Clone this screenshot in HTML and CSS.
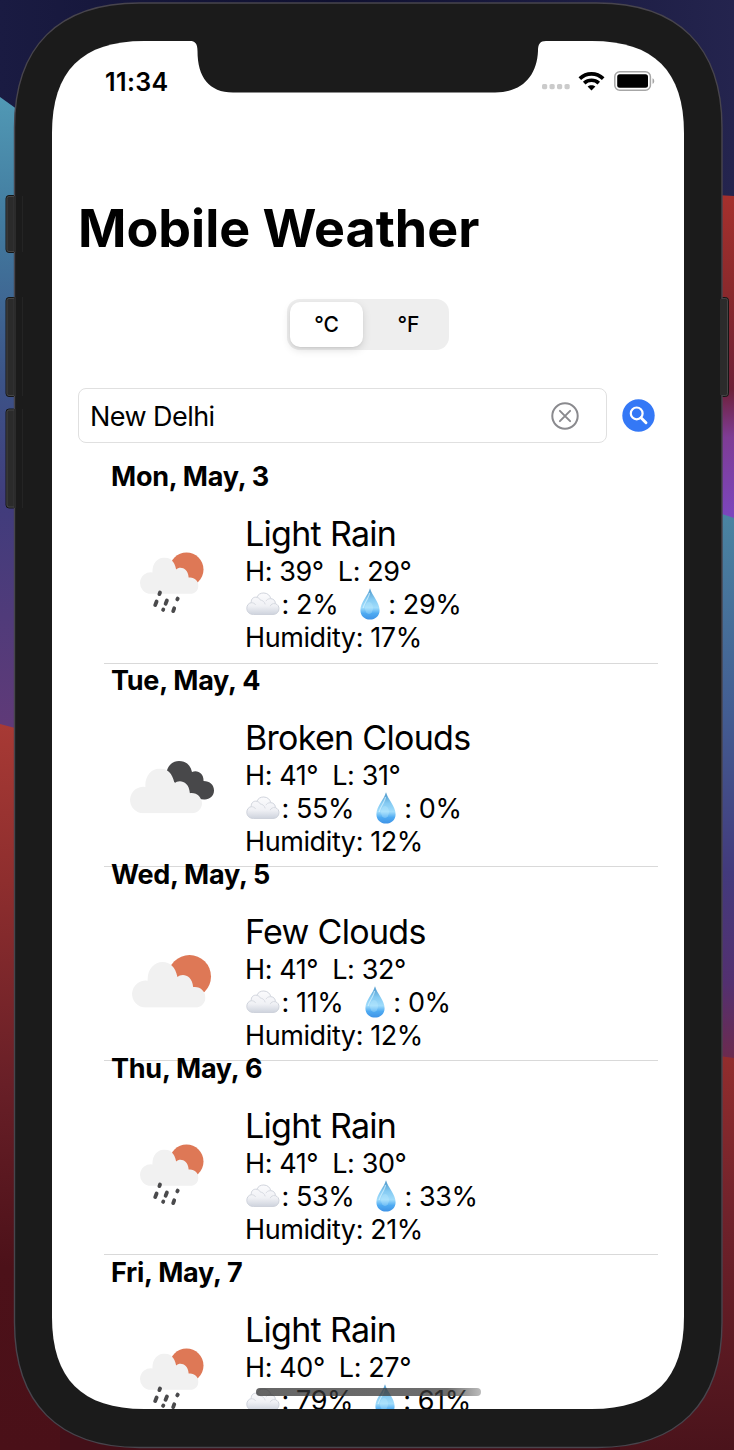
FILE: index.html
```
<!DOCTYPE html>
<html lang="en">
<head>
<meta charset="utf-8">
<title>Mobile Weather</title>
<link rel="stylesheet" href="styles.css">
</head>
<body>
<svg class="defs" width="0" height="0">
  <defs>
    <linearGradient id="puff" x1="0" y1="0" x2="0" y2="1"><stop offset="0" stop-color="#fbfbfd"/><stop offset=".6" stop-color="#f0f1f5"/><stop offset="1" stop-color="#ced3dd"/></linearGradient>
    <linearGradient id="water" x1="0" y1="0" x2="0" y2="1"><stop offset="0" stop-color="#4a94c8"/><stop offset=".35" stop-color="#84caf2"/><stop offset=".62" stop-color="#a0dcfb"/><stop offset=".8" stop-color="#4fabf2"/><stop offset="1" stop-color="#3f93e6"/></linearGradient>
    <symbol id="cloud" viewBox="0 0 220 137">
      <path d="M41 136.500A40.500 40.500 0 1 1 47 56C45 22 66 0 92 0C113 0 130 14 136 45C148 33 180 36 183 75C204 72 220 88 220 106C220 122 207 136.500 189 136.500Z"/>
    </symbol>
    <symbol id="rain" viewBox="0 0 64 62">
      <circle cx="46.500" cy="17.500" r="17" fill="#de7856"/>
      <use href="#cloud" x="0" y="5.500" width="58.500" height="36.500" fill="#f1f1f1"/>
      <g stroke="#4a4a4c" stroke-width="3.800" stroke-linecap="round">
        <path d="M20 40.500l-.6 1.600M16.600 49.500l-1.400 3.600M26.900 48.500l-1.300 3.200M37.700 46.600l-.4 .8M23.300 57.500l-.2 .4M34.200 56.300l-1 2.800"/>
      </g>
    </symbol>
    <symbol id="few" viewBox="0 0 80 54">
      <circle cx="57.500" cy="21.500" r="21.500" fill="#de7856"/>
      <use href="#cloud" x="0" y="7" width="73.500" height="45.800" fill="#f1f1f1"/>
    </symbol>
    <symbol id="broken" viewBox="0 0 85 54">
      <path d="M36 14C37 5 42 0 49 0C56 0 60.500 4 62 11C68 8.500 74 13 73.500 20C80 20 84 24 84 29.500C84 35 79.500 38.500 75 38.500C67 39 60 32 52 28Z" fill="#48484a"/>
      <use href="#cloud" x="0" y="7.500" width="72" height="45" fill="#f1f1f1"/>
    </symbol>
    <symbol id="e-cloud" viewBox="0 0 34 24">
      <path d="M7.500 22.500C3.500 22.500 .8 19.800 .8 16.300C.8 13.200 2.800 11 5.300 10.600C4.800 7 7.500 4.600 10.800 5.300C12.200 2.200 14.800 .9 17.800 1C21.600 1.100 24.200 3.600 24.700 6.600C27.800 6.800 29.600 9.200 29.300 11.600C31.700 12.400 33 14.400 33 16.600C33 20 30.600 22.500 27 22.500Z" fill="url(#puff)" stroke="#cbcfd8" stroke-width=".9"/>
      <path d="M5.300 10.800C7 10.600 8.800 11.400 9.600 12.900M10.800 5.500C12.500 5.500 13.800 6.600 14.200 8C16.500 8.200 18.600 9.700 19.200 12.400M24.500 6.800C22.300 6.500 20.600 7.700 19.900 9.200M29 11.700C26.800 11.200 24.800 12.400 24.200 14.200" fill="none" stroke="#d5d8df" stroke-width=".9"/>
    </symbol>
    <symbol id="e-drop" viewBox="0 0 20 32">
      <path d="M10 .3C12 7.500 19.600 14.500 19.600 22.300C19.600 28 15.500 31.600 10 31.600C4.500 31.600 .4 28 .4 22.300C.4 14.500 8 7.500 10 .3Z" fill="url(#water)"/>
      <ellipse cx="9" cy="20" rx="4" ry="6" fill="#c5edff" opacity=".3"/>
      <path d="M9.500 5C9 10 4 15 3.200 20" fill="none" stroke="#d6f2ff" stroke-width="1.200" opacity=".7"/>
    </symbol>
  </defs>
</svg>

<svg class="backdrop" width="734" height="1450" viewBox="0 0 734 1450" aria-hidden="true">
  <defs>
    <linearGradient id="navy" x1="0" x2="1" y1="0" y2="0"><stop offset="0" stop-color="#1a1b42"/><stop offset=".45" stop-color="#0f1030"/><stop offset="1" stop-color="#24244e"/></linearGradient>
    <linearGradient id="left1" gradientUnits="userSpaceOnUse" x1="0" x2="0" y1="95" y2="730"><stop offset="0" stop-color="#5199b5"/><stop offset=".2" stop-color="#427b9f"/><stop offset=".45" stop-color="#3c5387"/><stop offset=".65" stop-color="#413c7c"/><stop offset="1" stop-color="#603a78"/></linearGradient>
    <linearGradient id="left2" gradientUnits="userSpaceOnUse" x1="0" x2="0" y1="720" y2="1450"><stop offset="0" stop-color="#a83a35"/><stop offset=".22" stop-color="#8e2e2e"/><stop offset=".5" stop-color="#681f27"/><stop offset=".75" stop-color="#4c1119"/><stop offset="1" stop-color="#4a1018"/></linearGradient>
    <linearGradient id="right1" gradientUnits="userSpaceOnUse" x1="0" x2="0" y1="195" y2="518"><stop offset="0" stop-color="#a5302d"/><stop offset=".3" stop-color="#8a292c"/><stop offset=".6" stop-color="#6d2037"/><stop offset=".75" stop-color="#7e3c95"/><stop offset="1" stop-color="#7c46be"/></linearGradient>
    <linearGradient id="right2" gradientUnits="userSpaceOnUse" x1="0" x2="0" y1="515" y2="1065"><stop offset="0" stop-color="#4a84a2"/><stop offset=".36" stop-color="#435d92"/><stop offset=".65" stop-color="#433a7c"/><stop offset=".85" stop-color="#533070"/><stop offset="1" stop-color="#6e2a4c"/></linearGradient>
    <linearGradient id="right3" gradientUnits="userSpaceOnUse" x1="0" x2="0" y1="1055" y2="1450"><stop offset="0" stop-color="#922d2d"/><stop offset=".4" stop-color="#70222b"/><stop offset="1" stop-color="#4a131b"/></linearGradient>
  </defs>
  <rect width="734" height="1450" fill="url(#navy)"/>
  <path d="M0 97L60 140V760H0Z" fill="url(#left1)"/>
  <path d="M0 724L60 740V1450H0Z" fill="url(#left2)"/>
  <path d="M680 193L734 196V530H680Z" fill="url(#right1)"/>
  <path d="M680 500L734 518V1080H680Z" fill="url(#right2)"/>
  <path d="M600 1040L734 1058V1450H600Z" fill="url(#right3)"/>
  <rect x="60" y="1400" width="560" height="50" fill="#430f18"/>
  <g fill="#2b2b2b" stroke="#151515" stroke-width="1">
    <rect x="6" y="195.500" width="20" height="57" rx="3"/>
    <rect x="6" y="297.500" width="20" height="99" rx="3"/>
    <rect x="6" y="409" width="20" height="99" rx="3"/>
    <rect x="708" y="297.500" width="20.500" height="99" rx="3"/>
  </g>
  <g fill="none" stroke="#454545" stroke-width="1">
    <path d="M16 196.500H9Q7 196.500 7 198.500V249.500Q7 251.500 9 251.500H16M16 298.500H9Q7 298.500 7 300.500V393.500Q7 395.500 9 395.500H16M16 410H9Q7 410 7 412V505Q7 507 9 507H16M719 298.500H725.500Q727.500 298.500 727.500 300.500V393.500Q727.500 395.500 725.500 395.500H719"/>
  </g>
  <path d="M14.500 127.500C14.500 46.500 58.500 3 139.500 3H597C678 3 722 46.500 722 127.500V1322.500C722 1403.500 678 1447.500 597 1447.500H139.500C58.500 1447.500 14.500 1403.500 14.500 1322.500Z" fill="#1b1b1b" stroke="#48454d" stroke-width="1.400"/>
  <path d="M15 196V252M15 297V396M15 409V508" stroke="#2b2b2b" stroke-width="2"/>
  <path d="M22.500 196V252M22.500 297V396M22.500 409V508" stroke="#242424"/>
  <path d="M721.500 299V395" stroke="#2b2b2b" stroke-width="3"/>
</svg>

<main class="screen">
  <svg class="notch" width="350" height="52" viewBox="0 0 350 52" aria-hidden="true"><path d="M0 0C5 0 7.500 2.500 7.500 10C7.500 36 19 51.500 43 51.500H305C332 51.500 347 35 348 10C348 3 350 0 356 0Z" fill="#1b1b1b"/></svg>
  <header class="status">
    <span class="time">11:34</span>
    <span class="signals">
      <svg class="dots" width="29" height="6" viewBox="0 0 29 6" fill="#cbcbcb"><rect width="5.200" height="5.200" rx="1.600" x="0"/><rect width="5.200" height="5.200" rx="1.600" x="7.500"/><rect width="5.200" height="5.200" rx="1.600" x="15"/><rect width="5.200" height="5.200" rx="1.600" x="22.500"/></svg>
      <svg class="wifi" width="27" height="20" viewBox="0 0 27 20"><g fill="none" stroke="#000" stroke-width="3.700"><path d="M1.800 7.600C8.400 1.200 18.600 1.200 25.200 7.600"/><path d="M6.200 12.100C10.400 8.300 16.600 8.300 20.800 12.100"/></g><path d="M9.600 15.600C11.800 13.700 15.200 13.700 17.400 15.600L13.500 19.600Z"/></svg>
      <svg class="battery" width="41" height="20" viewBox="0 0 41 20"><rect x=".8" y=".8" width="35.600" height="18.400" rx="5" fill="none" stroke="#a6a6a6" stroke-width="1.500"/><rect x="3.200" y="3.200" width="30.800" height="13.600" rx="2.500"/><path d="M38.500 7.200C40.800 8 40.800 12 38.500 12.800Z" fill="#a6a6a6"/></svg>
    </span>
  </header>

  <h1 class="title">Mobile Weather</h1>

  <div class="units"><span class="unit active">°C</span><span class="unit">°F</span></div>

  <div class="search">
    <div class="field"><span class="query">New Delhi</span>
      <svg width="28" height="28" viewBox="0 0 28 28" fill="none" stroke="#8a8a8e" stroke-width="2"><circle cx="14" cy="14" r="12.700"/><path d="M8.900 8.900L19.100 19.100M19.100 8.900L8.900 19.100" stroke-linecap="round"/></svg>
    </div>
    <svg width="33" height="33" viewBox="0 0 33 33"><circle cx="16.500" cy="16.500" r="16.200" fill="#3478f6"/><circle cx="14.700" cy="14.400" r="5.900" fill="none" stroke="#fff" stroke-width="2.200"/><path d="M19 18.700L24 23.700" stroke="#fff" stroke-width="2.900" stroke-linecap="round"/></svg>
  </div>

  <section class="forecast">
    <article class="day">
      <h2 class="date">Mon, May, 3</h2>
      <div class="body">
        <div class="picture"><svg class="rain" width="64" height="62"><use href="#rain"/></svg></div>
        <div class="info">
          <p class="cond">Light Rain</p>
          <p class="line"><span>H: 39°</span><span>L: 29°</span></p>
          <p class="line"><span class="pair"><svg class="ec" width="34" height="24"><use href="#e-cloud"/></svg>: 2%</span><span class="pair"><svg class="ed" width="20" height="32"><use href="#e-drop"/></svg>: 29%</span></p>
          <p class="line">Humidity: 17%</p>
        </div>
      </div>
    </article>
    <article class="day">
      <h2 class="date">Tue, May, 4</h2>
      <div class="body">
        <div class="picture"><svg class="broken" width="85" height="54"><use href="#broken"/></svg></div>
        <div class="info">
          <p class="cond">Broken Clouds</p>
          <p class="line"><span>H: 41°</span><span>L: 31°</span></p>
          <p class="line"><span class="pair"><svg class="ec" width="34" height="24"><use href="#e-cloud"/></svg>: 55%</span><span class="pair"><svg class="ed" width="20" height="32"><use href="#e-drop"/></svg>: 0%</span></p>
          <p class="line">Humidity: 12%</p>
        </div>
      </div>
    </article>
    <article class="day tight">
      <h2 class="date">Wed, May, 5</h2>
      <div class="body">
        <div class="picture"><svg class="few" width="80" height="54"><use href="#few"/></svg></div>
        <div class="info">
          <p class="cond">Few Clouds</p>
          <p class="line"><span>H: 41°</span><span>L: 32°</span></p>
          <p class="line"><span class="pair"><svg class="ec" width="34" height="24"><use href="#e-cloud"/></svg>: 11%</span><span class="pair"><svg class="ed" width="20" height="32"><use href="#e-drop"/></svg>: 0%</span></p>
          <p class="line">Humidity: 12%</p>
        </div>
      </div>
    </article>
    <article class="day tight">
      <h2 class="date">Thu, May, 6</h2>
      <div class="body">
        <div class="picture"><svg class="rain" width="64" height="62"><use href="#rain"/></svg></div>
        <div class="info">
          <p class="cond">Light Rain</p>
          <p class="line"><span>H: 41°</span><span>L: 30°</span></p>
          <p class="line"><span class="pair"><svg class="ec" width="34" height="24"><use href="#e-cloud"/></svg>: 53%</span><span class="pair"><svg class="ed" width="20" height="32"><use href="#e-drop"/></svg>: 33%</span></p>
          <p class="line">Humidity: 21%</p>
        </div>
      </div>
    </article>
    <article class="day">
      <h2 class="date">Fri, May, 7</h2>
      <div class="body">
        <div class="picture"><svg class="rain" width="64" height="62"><use href="#rain"/></svg></div>
        <div class="info">
          <p class="cond">Light Rain</p>
          <p class="line"><span>H: 40°</span><span>L: 27°</span></p>
          <p class="line"><span class="pair"><svg class="ec" width="34" height="24"><use href="#e-cloud"/></svg>: 79%</span><span class="pair"><svg class="ed" width="20" height="32"><use href="#e-drop"/></svg>: 61%</span></p>
        </div>
      </div>
    </article>
  </section>
  <div class="home"></div>
</main>
</body>
</html>
```
FILE: styles.css
```
* { box-sizing: border-box; }
body {
  margin: 0;
  width: 734px;
  height: 1450px;
  padding: 41px 50px 0 52px;
  overflow: hidden;
  position: relative;
  background: #1b1b1b;
  color: #000;
  font-family: Inter, "Liberation Sans", sans-serif;
}
h1, h2, p { margin: 0; }
svg { display: block; flex: none; }
.defs { position: absolute; }
.backdrop { position: absolute; left: 0; top: 0; }
.screen {
  position: relative;
  width: 632px;
  height: 1368px;
  overflow: hidden;
  background: #fff;
  clip-path: path("M0 92C0 30 30 0 92 0H540C602 0 632 30 632 92V1276C632 1338 602 1368 540 1368H92C30 1368 0 1338 0 1276Z");
}
.notch { position: absolute; left: 138px; top: 0; overflow: visible; }
.status {
  display: flex;
  justify-content: space-between;
  height: 80px;
  padding: 25px 29px 0 53px;
}
.time { font-size: 25px; line-height: 32px; font-weight: 600; letter-spacing: 0.4px; }
.signals { display: flex; align-items: flex-start; padding-top: 5px; }
.dots { margin-top: 13px; }
.wifi { margin-left: 7px; }
.battery { margin-left: 9px; }
.title {
  height: 64px;
  margin: 75px 0 0 26px;
  font-size: 52px;
  line-height: 65px;
  font-weight: 700;
  letter-spacing: 0;
  white-space: nowrap;
}
.units {
  display: flex;
  width: 162px;
  height: 51px;
  margin: 39px 0 0 235px;
  padding: 3px;
  border-radius: 13px;
  background: #eee;
}
.unit {
  display: flex;
  flex: 1;
  align-items: center;
  justify-content: center;
  padding-left: 8px;
  font-size: 21px;
  font-weight: 500;
}
.unit.active {
  flex: none;
  width: 73px;
  padding-left: 0;
  border-radius: 10px;
  background: #fff;
  box-shadow: 0 3px 8px rgba(0, 0, 0, .13), 0 1px 2px rgba(0, 0, 0, .06);
}
.search { display: flex; align-items: center; gap: 15px; margin: 38px 0 0 26px; }
.field {
  display: flex;
  align-items: center;
  justify-content: space-between;
  width: 529px;
  height: 55px;
  padding: 0 27px 0 11px;
  border: 1px solid #e0e0e0;
  border-radius: 8px;
}
.query { padding-top: 1px; font-size: 27px; letter-spacing: -0.55px; }
.forecast { margin: 16px 26px 0 52px; }
.day { height: 204px; border-bottom: 1px solid #d9d9d9; }
.day:first-child { height: 205px; margin-bottom: -1px; }
.day.tight { margin-top: -10px; }
.date {
  height: 34px;
  padding-left: 7px;
  font-size: 27px;
  line-height: 35px;
  font-weight: 700;
  letter-spacing: -0.25px;
}
.body { display: flex; padding-top: 20px; }
.picture { width: 141px; }
.rain { margin: 39px 0 0 35.500px; }
.broken { margin: 44px 0 0 26px; }
.few { margin: 44px 0 0 28px; }
.info { white-space: nowrap; }
.cond { height: 42px; font-size: 34px; line-height: 42px; letter-spacing: -0.7px; }
.line {
  display: flex;
  gap: 14px;
  height: 33px;
  font-size: 27px;
  line-height: 33px;
  letter-spacing: -0.4px;
}
.pair { display: flex; }
.ec { margin: 4px 1.500px 0 1px; }
.ed { margin: 0 8px 0 8px; }
.home {
  position: absolute;
  left: 204px;
  top: 1347px;
  width: 225px;
  height: 8px;
  border-radius: 4px;
  background: linear-gradient(90deg, rgba(50, 50, 50, .75), rgba(60, 60, 60, .75) 85%, rgba(120, 120, 120, .5));
}
```
